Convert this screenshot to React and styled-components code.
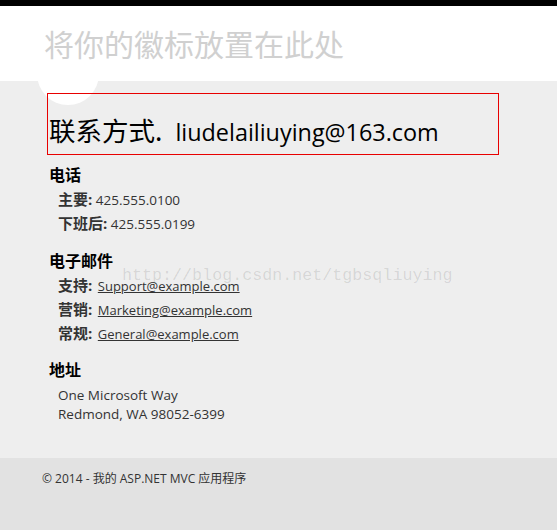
import React from "react";
import styled, { createGlobalStyle } from "styled-components";

const GlobalStyle = createGlobalStyle`
  html, body {
    margin: 0;
    padding: 0;
    background: #e2e2e2;
  }
  body {
    border-top: 6px solid #000;
    font-family: "Open Sans", "Noto Sans CJK SC", sans-serif;
    color: #333;
  }
`;

const sections = [
  {
    title: "电话",
    rows: [
      { label: "主要:", value: "425.555.0100" },
      { label: "下班后:", value: "425.555.0199" },
    ],
  },
  {
    title: "电子邮件",
    rows: [
      { label: "支持:", value: "Support@example.com", link: true },
      { label: "营销:", value: "Marketing@example.com", link: true },
      { label: "常规:", value: "General@example.com", link: true },
    ],
  },
];

function InfoRow({ label, value, link }) {
  return (
    <Row>
      <Label>{label}</Label> {link ? <Mail href="#">{value}</Mail> : value}
    </Row>
  );
}

export default function App() {
  return (
    <>
      <GlobalStyle />
      <Header>
        <Logo>将你的徽标放置在此处</Logo>
      </Header>
      <Main>
        <Circle />
        <TitleBox>
          <Title>
            <Cjk>联系方式.</Cjk>liudelailiuying@163.com
          </Title>
        </TitleBox>
        {sections.map((s) => (
          <Section key={s.title}>
            <Heading>{s.title}</Heading>
            {s.rows.map((r) => (
              <InfoRow key={r.label} {...r} />
            ))}
          </Section>
        ))}
        <Section $gap={13}>
          <Heading>地址</Heading>
          <Address>
            One Microsoft Way
            <br />
            Redmond, WA 98052-6399
          </Address>
        </Section>
        <Watermark>http://blog.csdn.net/tgbsqliuying</Watermark>
      </Main>
      <Footer>© 2014 - 我的 ASP.NET MVC 应用程序</Footer>
    </>
  );
}

const Header = styled.header`
  position: relative;
  z-index: 2;
  height: 75px;
  background: #fff;
  padding-left: 44px;
  box-sizing: border-box;
`;

const Logo = styled.div`
  padding-top: 17px;
  font-family: "Noto Sans CJK SC", sans-serif;
  font-size: 30px;
  line-height: 40px;
  color: #d0d0d0;
`;

const Main = styled.main`
  position: relative;
  background: #eeeeee;
  height: 377px;
  padding: 12px 0 0 47px;
  box-sizing: border-box;
`;

const Circle = styled.div`
  position: absolute;
  left: 37px;
  top: -38px;
  width: 62px;
  height: 62px;
  border-radius: 50%;
  background: #fff;
`;

const TitleBox = styled.div`
  position: relative;
  width: 449px;
  height: 60px;
  border: 1px solid #e80000;
  box-sizing: content-box;
  display: flex;
  align-items: flex-end;
  padding-left: 1px;
`;

const Title = styled.h1`
  margin: 0 0 6px;
  font-size: 23.4px;
  font-weight: normal;
  color: #000;
  line-height: 32px;
`;

const Cjk = styled.span`
  font-family: "Noto Sans CJK SC", sans-serif;
  font-size: 26.5px;
  margin-right: 13px;
`;

const Section = styled.section`
  margin-top: ${({ $gap }) => $gap ?? 14}px;
  padding-left: 2px;
  &:first-of-type {
    margin-top: 9px;
  }
`;

const Heading = styled.h3`
  margin: 0 0 2px;
  font-size: 16px;
  font-weight: bold;
  color: #000;
  line-height: 22px;
`;

const Row = styled.div`
  padding-left: 9px;
  height: 24px;
  font-size: 13.5px;
  line-height: 24px;
  color: #333;
`;

const Label = styled.strong`
  font-size: 15px;
  line-height: 1;
  font-weight: bold;
  color: #333;
`;

const Mail = styled.a`
  margin-left: 2px;
  font-size: 13px;
  color: #333;
  text-decoration: underline;
`;

const Address = styled.address`
  padding-left: 9px;
  padding-top: 3px;
  font-style: normal;
  font-size: 13.5px;
  line-height: 19px;
  color: #333;
`;

const Watermark = styled.div`
  position: absolute;
  left: 122px;
  top: 185px;
  font-family: "Liberation Mono", monospace;
  font-size: 16.7px;
  color: rgba(0, 0, 0, 0.11);
  pointer-events: none;
`;

const Footer = styled.footer`
  height: 72px;
  background: #e2e2e2;
  padding: 11px 0 0 42px;
  box-sizing: border-box;
  font-size: 12px;
  color: #333;
`;
